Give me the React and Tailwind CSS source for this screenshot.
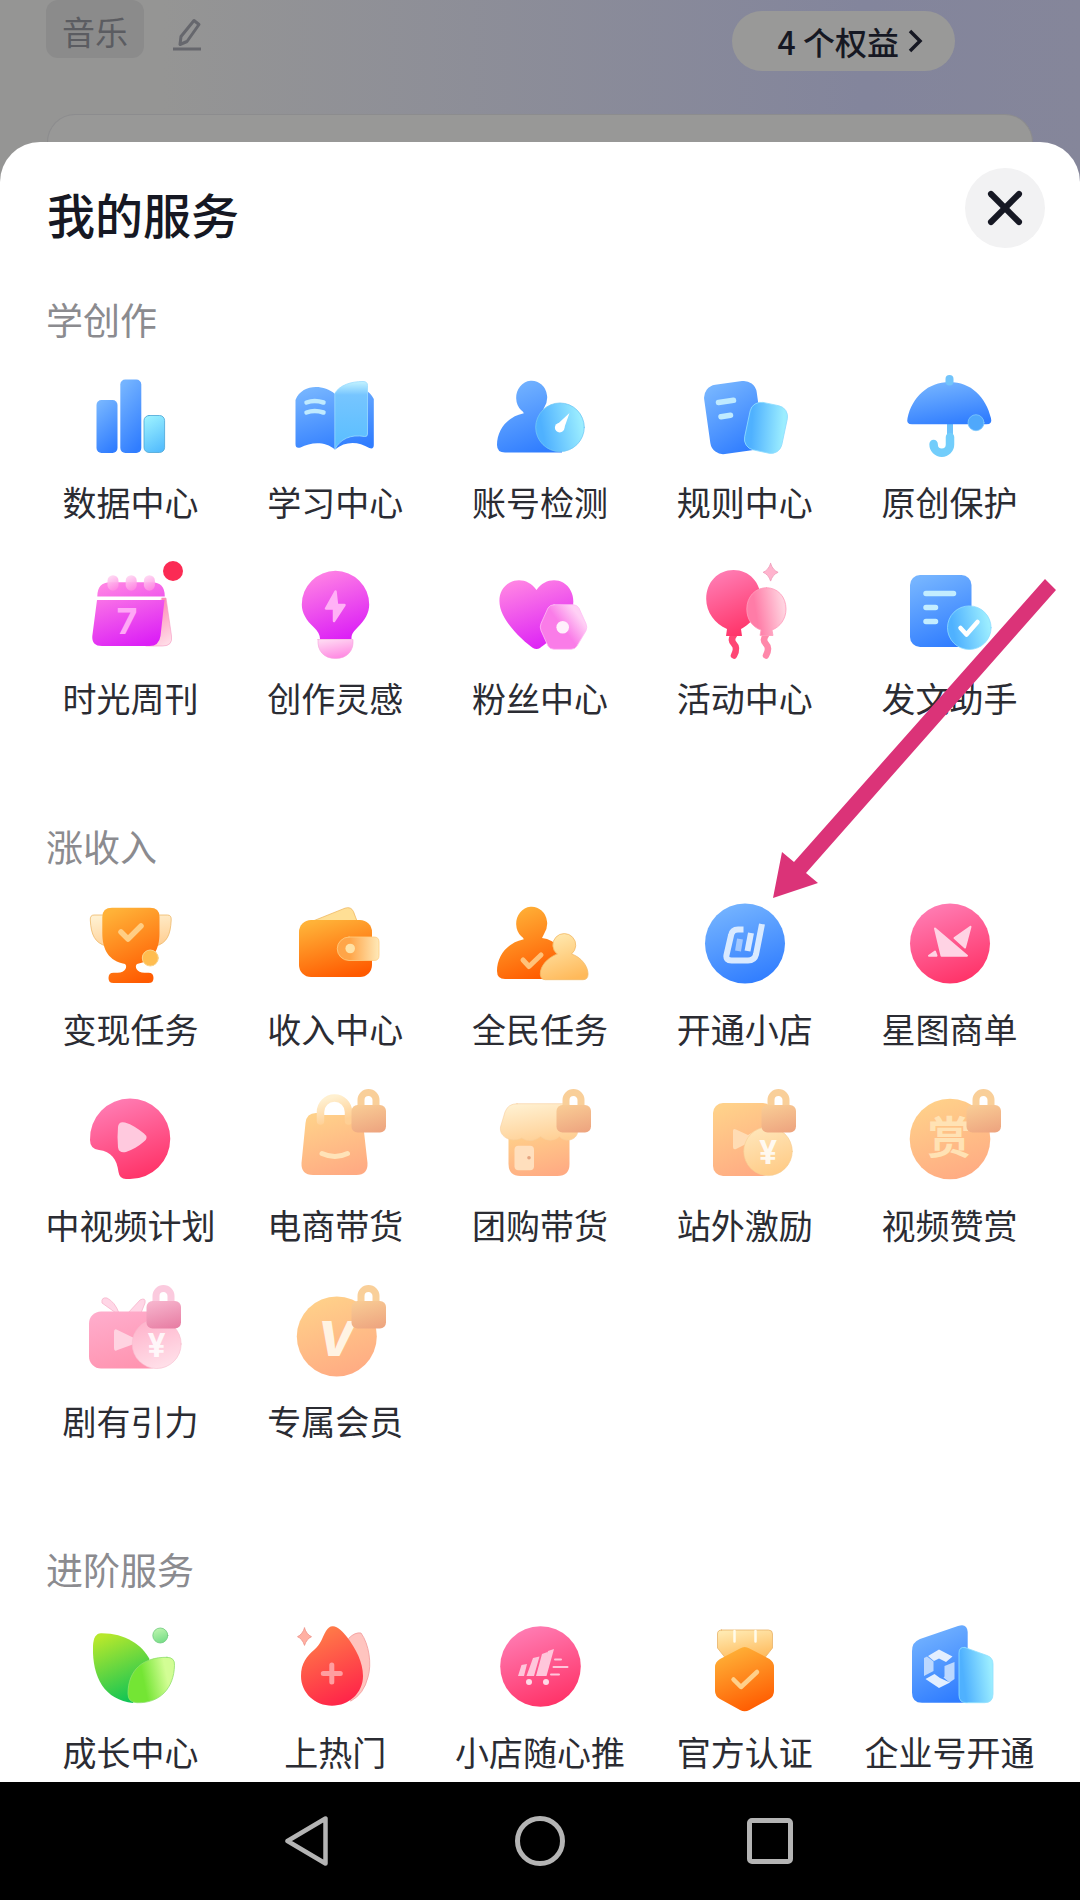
import React from 'react';
import { X } from 'lucide-react';

const GRADIENTS = {
  blue: ['#75b4ff', '#307dff'],
  cyan: ['#9af0ff', '#55bdfd'],
  magenta: ['#ff83e4', '#dc1ff6'],
  blush: ['#ffd7f2', '#ff86e2'],
  rose: ['#ff7db4', '#ff3267'],
  petal: ['#ff7fae', '#ffdbe6'],
  orange: ['#ffb238', '#ff5a00'],
  cream: ['#ffe9b0', '#ffb95a'],
  coinSand: ['#ffe6ba', '#ffcb86'],
  sand: ['#ffd18a', '#ffab83'],
  vanilla: ['#fff0d0', '#ffcf94'],
  lockSand: ['#f8ca94', '#eea680'],
  pink: ['#ffaccb', '#ff94b0'],
  lockPink: ['#f6b3cc', '#e880a5'],
  coinPink: ['#ffb3cb', '#ffe1ea'],
  green: ['#b6e82c', '#0cc356'],
  mint: ['#bdf5ae', '#75dc86'],
  fire: ['#ff8048', '#ff2349'],
};

const Gradients = () => (
  <svg className="absolute h-0 w-0" aria-hidden="true">
    <defs>
      {Object.entries(GRADIENTS).map(([name, [from, to]]) => (
        <linearGradient key={name} id={name} x1="0.3" y1="0" x2="0.65" y2="1">
          <stop offset="0" stopColor={from} />
          <stop offset="1" stopColor={to} />
        </linearGradient>
      ))}
      <linearGradient id="glassX" x1="0" y1="0.4" x2="1" y2="0.2">
        <stop offset="0.1" stopColor="#4fb1ff" />
        <stop offset="0.9" stopColor="#9bedff" />
      </linearGradient>
      <linearGradient id="limeX" x1="0" y1="0.4" x2="1" y2="0.2">
        <stop offset="0.3" stopColor="#74e534" />
        <stop offset="0.8" stopColor="#d2fd94" />
      </linearGradient>
      <linearGradient id="petalX" x1="0" y1="0.4" x2="1" y2="0.2">
        <stop offset="0.2" stopColor="#ff7ca7" />
        <stop offset="0.9" stopColor="#ffd2df" />
      </linearGradient>
      <linearGradient id="hexX" x1="0.3" y1="0.7" x2="1" y2="0.2">
        <stop offset="0.3" stopColor="#fa7ce8" />
        <stop offset="0.8" stopColor="#ffd0f5" />
      </linearGradient>
      <linearGradient id="page" x1="0" y1="0" x2="0" y2="1">
        <stop offset="0" stopColor="#c3f3ff" />
        <stop offset="0.2" stopColor="#76c5ff" />
        <stop offset="1" stopColor="#58beff" />
      </linearGradient>
      <linearGradient id="clasp" x1="0" y1="0" x2="1" y2="0">
        <stop offset="0.3" stopColor="#ffa548" />
        <stop offset="1" stopColor="#ffe9b8" />
      </linearGradient>
    </defs>
  </svg>
);

const Icon = ({ children }) => (
  <svg className="h-[100px] w-[100px] overflow-visible" viewBox="0 0 100 100" fill="none" strokeLinecap="round" strokeLinejoin="round" aria-hidden="true">
    {children}
  </svg>
);

const Lock = ({ fill = 'url(#lockSand)', shackle = '#f9cf99' }) => (
  <g>
    <path d="M76 18V11a7.500 7.500 0 0 1 15 0v7" stroke={shackle} strokeWidth="7" strokeLinecap="butt" />
    <rect x="66.500" y="16" width="34.500" height="27.500" rx="6" fill={fill} />
  </g>
);

const Yen = ({ x, y }) => (
  <text x={x} y={y} textAnchor="middle" fontSize="33" fontWeight="700" fill="#fff" fillOpacity="0.85" fontFamily="Roboto, sans-serif">¥</text>
);

const DataIcon = () => (
  <Icon>
    <rect x="16.500" y="34" width="21" height="53" rx="5" fill="url(#blue)" />
    <rect x="40.300" y="13.500" width="21" height="73.500" rx="5" fill="url(#blue)" />
    <rect x="64" y="49.500" width="20.600" height="37" rx="5" fill="url(#cyan)" stroke="#4aa5d6" strokeWidth="0.800" />
  </Icon>
);

const BookIcon = () => (
  <Icon>
    <path d="M10.500 34C17 18 38 18 50 28C62 18 81 18 88.800 33V79q0 4.500-4.500 3C73 75 60 75 50 83.500C40 75 26 76 15.500 81.500q-5 1.500-5-3.500z" fill="url(#blue)" />
    <path d="M50 27C55 19 66 15.500 78 15.500q4.500 0 4.500 4V68q0 3-3 2.500C66 68 55 73 50 83z" fill="url(#page)" stroke="#9bdcff" strokeWidth="0.800" />
    <path d="M21.500 36.500q8-3 17 0M21.500 46.500q8-3 17 0" stroke="#bfeaff" strokeWidth="4.500" />
  </Icon>
);

const AccountIcon = () => (
  <Icon>
    <path d="M31 44q4 3 2 3.500C17 51 7 64 7 79q0 7.500 8 7.500h57V56Q62 47 52 46l2-4A15.500 17 0 1 0 31 44z" fill="url(#blue)" />
    <circle cx="70" cy="61.300" r="24.300" fill="url(#glassX)" stroke="#72c8f5" strokeWidth="0.800" />
    <path d="M66 59.500L79.500 47L73.500 64z" fill="#fff" />
    <circle cx="69.700" cy="61.700" r="4.800" fill="#fff" />
  </Icon>
);

const RulesIcon = () => (
  <Icon>
    <rect x="12" y="16.500" width="53" height="70" rx="13" transform="rotate(-8 39 51.500)" fill="url(#blue)" />
    <rect x="52" y="37.500" width="38" height="48.500" rx="11" transform="rotate(12 70.700 61.700)" fill="url(#glassX)" stroke="#8fdcff" strokeWidth="0.800" />
    <path d="M23.500 36.500L38.500 34.300M26 50.800L35.500 49.300" stroke="#bfeaff" strokeWidth="5.500" />
  </Icon>
);

const UmbrellaIcon = () => (
  <Icon>
    <path d="M47 56h6v14h-6z" fill="#6dc2fb" />
    <path d="M50 71v7.500a8.200 8.200 0 0 1-16.400 0V78" stroke="#72cdfb" strokeWidth="8.500" />
    <path d="M12 58.300q-6 0-4.500-6C12 31 28 16 49.500 16S86 31 91 52.300q1.500 6-4.500 6z" fill="url(#blue)" />
    <rect x="45.500" y="9" width="8" height="10.500" rx="4" fill="#72c4fb" />
    <circle cx="76" cy="56.700" r="8" fill="#4fa8fb" stroke="#7dc8fb" strokeWidth="0.800" />
  </Icon>
);

const CalendarIcon = () => (
  <Icon>
    <path d="M82 36h4L91.500 74q1.500 10-9 10H66z" fill="url(#petal)" stroke="#f59ac4" strokeWidth="0.600" />
    <path d="M17.300 34.500q0-14.200 13-14.200h41.500q13 0 13 14.200zM17 38h67.500L80.500 74q-1.500 10-11 10H22q-10.500 0-9.700-10z" fill="url(#magenta)" />
    {[33, 51.2, 69.4].map((x) => (
      <rect key={x} x={x - 5.5} y="13.200" width="11" height="15.500" rx="5.500" fill="url(#blush)" fillOpacity="0.900" />
    ))}
    <text x="47" y="72" textAnchor="middle" fontSize="36" fontWeight="700" fill="#ffa8f6" fontFamily="Inter, sans-serif">7</text>
  </Icon>
);

const BulbIcon = () => (
  <Icon>
    <path d="M35 77q0-6-6-11.500C21.500 58.500 16.800 51 16.800 42.500a33.700 33.700 0 0 1 67.400 0C84.200 51 80 58 72.500 65.500 67 71 66.500 73 66.500 77z" fill="url(#magenta)" />
    <path d="M33 77.500h35C69 89 62 96.500 50.500 96.500S32 89 33 77.500z" fill="url(#blush)" stroke="#f7a0dc" strokeWidth="0.600" />
    <path d="M50.500 29.500L41 46.500h8v12.500L59.500 43h-7.500z" fill="#ffb1f6" stroke="#ffb1f6" strokeWidth="2.500" />
  </Icon>
);

const HeartIcon = () => (
  <Icon>
    <path d="M46.500 28C53 18 65 16 73 20.500C84 27 86 41 80 53C73 67 56 82 50 86q-3.500 2-7 0C36 81 20 67 13 53C7 41 8 27 20 20.500C28 16 40 18 46.500 28z" fill="url(#magenta)" />
    <path d="M64 42.700h19q4 0 6 3.500l7 15.500q1.500 3.500 0 7L87 84q-2 3.300-6 3.300H64q-4 0-6-3.300l-7-15.500q-1.500-3.500 0-7L58 46q2-3.300 6-3.300z" fill="url(#hexX)" stroke="#ffbcf4" strokeWidth="0.800" />
    <circle cx="72.700" cy="65.300" r="6.300" fill="#fff0fc" />
  </Icon>
);

const BalloonIcon = () => (
  <Icon>
    <path d="M39 73q-4 5 0 9t0 11.500" stroke="#ff4775" strokeWidth="6.500" />
    <path d="M38.500 8C54 8 65.800 20 65.800 37C65.800 50 56 62 46 67l1 7H31l1-7C20 62 11.200 50 11.200 37C11.200 20 23 8 38.500 8z" fill="url(#rose)" />
    <path d="M71 73q-4 5 0 9t0 11.500" stroke="#ff88aa" strokeWidth="6.500" />
    <path d="M71.400 25.700C83 25.700 91 35 91 47C91 57 85 65 77 68l1 5.500H65l1-5.500C57 65 51.800 57 51.800 47C51.800 35 60 25.700 71.400 25.700z" fill="url(#petalX)" stroke="#ff9cbb" strokeWidth="0.800" />
    <path d="M75.600 1.500q2 6.500 7.500 8.800q-5.500 2.300-7.500 8.800q-2-6.500-7.500-8.800q5.500-2.300 7.500-8.800z" fill="#ffb4ce" stroke="#ef9ab9" strokeWidth="0.800" />
  </Icon>
);

const AssistantIcon = () => (
  <Icon>
    <rect x="10" y="13" width="61.500" height="72" rx="10" fill="url(#blue)" />
    <path d="M26 31.500h27.500M26 45.500h9.500M26 59.500h9.500" stroke="#c3edff" strokeWidth="5.500" />
    <circle cx="69.300" cy="65.700" r="21.800" fill="url(#glassX)" stroke="#8fdcff" strokeWidth="0.800" />
    <path d="M60.500 66l6 6.500L77.500 60" stroke="#fff" strokeWidth="4.500" />
  </Icon>
);

const TrophyIcon = () => (
  <Icon>
    <path d="M24 22H14q-4 0-3.700 5C11 42 15 50 26 53zM77 22h10.500q4 0 3.700 5C90.500 42 87 50 76 53z" fill="url(#vanilla)" stroke="#eeb768" strokeWidth="0.800" />
    <path d="M32 14.700h38q9.500 0 9.500 9V40C79.500 57 73 68 57 71q-2 1.500-.5 5q2 3.700 8 3.700h4q5 0 5 5.200t-5 5.200H33.500q-5 0-5-5.200t5-5.200h4q6 0 8-3.700q1.500-3.500-.5-5C29 68 22.300 57 22.300 40V24q0-9.300 9.700-9.300z" fill="url(#orange)" />
    <path d="M41 39l7 7L61 33" stroke="#ffce84" strokeWidth="5.500" />
    <circle cx="70.300" cy="65" r="8" fill="#ffbd50" stroke="#fbd48a" strokeWidth="1" />
  </Icon>
);

const WalletIcon = () => (
  <Icon>
    <path d="M28 28L60 15.200q6-2 8.500 3.500L72 28z" fill="#ffdf95" stroke="#efb75f" strokeWidth="0.800" />
    <rect x="14" y="27" width="73" height="57" rx="12" fill="url(#orange)" />
    <path d="M64 44h25q5 0 5 5v13.500q0 5-5 5H64A11.700 11.700 0 0 1 64 44z" fill="url(#clasp)" stroke="#ffce82" strokeWidth="0.800" />
    <circle cx="65.200" cy="55.500" r="4.800" fill="#ffe1a5" />
  </Icon>
);

const CrowdIcon = () => (
  <Icon>
    <path d="M31 43q4 3 2 3.500C17 50 7 63 7 78q0 8 8 8h57V56Q62 46 52 45l2-4A15.500 17 0 1 0 31 43z" fill="url(#orange)" />
    <path d="M33 67l6 6.500L51 62" stroke="#ffc27a" strokeWidth="5" />
    <path d="M67 61C57 65 50.300 73 50.300 81q0 5.700 5 5.700H93q5 0 5-5.700C98 73 91 64 81.500 61A11.500 11.500 0 1 0 67 61z" fill="url(#cream)" stroke="#f3b966" strokeWidth="0.800" />
  </Icon>
);

const ShopIcon = () => (
  <Icon>
    <circle cx="50" cy="50.500" r="40" fill="url(#blue)" />
    <g stroke="#d9eaff" strokeLinecap="butt">
      <path d="M48.500 36.500H43q-6 0-7 6L31.500 62q-1 5.500 5 5.500H53q6.500 0 8-6L67 31" strokeWidth="6" />
      <path d="M52.500 58L56 40" strokeWidth="6" />
      <path d="M43 58l2-12" strokeWidth="6" strokeOpacity="0.600" />
    </g>
  </Icon>
);

const StarIcon = () => (
  <Icon>
    <circle cx="50" cy="50.500" r="40" fill="url(#rose)" />
    <path d="M35 35.500L67 62.700H41.500zM70.500 33.700L54.500 45l10.500 9.500zM29 62.700l6-4.200 1.500 4.200z" fill="#ffd3e4" stroke="#ffd3e4" strokeWidth="2" />
  </Icon>
);

const VideoIcon = () => (
  <Icon>
    <path d="M50 9.500a40 40 0 0 1 0 80.500h-4q-6.500 0-7.500-7C37 70 31 62.500 19 61q-9-1-9-10A40 40 0 0 1 50 9.500z" fill="url(#rose)" />
    <path d="M38 38q.5-6 7-4.500c7 2 12 5.500 19 11q5 4 0 8c-6 5-11 8-18 10.500q-7 1.500-8-4.500q-1-10 0-20.500z" fill="#ffc9de" />
  </Icon>
);

const BagIcon = () => (
  <Icon>
    <path d="M31 24h36q10 0 11 10l4.500 40q.5 12-11 12H28Q16 86 16.500 74l4-40q1-10 10.500-10z" fill="url(#sand)" />
    <path d="M36.500 26a13 12 0 0 1 26 0z" fill="#fff" />
    <path d="M35.500 32V23a14 14 0 0 1 28 0v9" stroke="url(#vanilla)" strokeWidth="7.500" />
    <path d="M37 64.500q13 6 25.500 0" stroke="#ffe3b8" strokeWidth="5" />
    <Lock />
  </Icon>
);

const StoreIcon = () => (
  <Icon>
    <path d="M18.500 40h61v35q0 12-12 12h-37q-12 0-12-12z" fill="url(#sand)" />
    <path d="M27 14.700h46q9 0 11.500 8L88 39c1 13-13 15-18.500 8.500q-9 7.500-19 0q-9.500 7.500-19 1.500C23 54 9 49 10.500 38L15 23q3-8.300 12-8.300z" fill="url(#vanilla)" stroke="#f9cf9c" strokeWidth="0.600" />
    <rect x="24.500" y="56.700" width="19.500" height="24.500" rx="4" fill="#ffdfbd" />
    <circle cx="39" cy="68.700" r="1.800" fill="#e5a480" />
    <Lock />
  </Icon>
);

const OffsiteIcon = () => (
  <Icon>
    <rect x="18" y="14" width="60" height="73" rx="10" fill="url(#sand)" />
    <path d="M38 42q0-3 3-1.500L53 46l10-6q8-1 11 6v13L53 54l-12 6q-3 1-3-2z" fill="#ffdcb4" />
    <circle cx="73" cy="62.300" r="24.300" fill="url(#coinSand)" stroke="#f6cd92" strokeWidth="0.600" />
    <Yen x="73" y="75" />
    <Lock />
  </Icon>
);

const RewardIcon = () => (
  <Icon>
    <circle cx="50" cy="50" r="40.300" fill="url(#sand)" />
    <text x="49.500" y="65" textAnchor="middle" fontSize="44" fontWeight="700" fill="#ffe2b4" fontFamily="'Noto Sans CJK SC', sans-serif">赏</text>
    <Lock />
  </Icon>
);

const DramaIcon = () => (
  <Icon>
    <path d="M36 28L22 18q-1-6 5-5q8 4 12 15zM48 28l12-13q6-3 5 3L61 28z" fill="#ffd6e6" stroke="#f6b5cc" strokeWidth="0.800" />
    <rect x="9" y="26.500" width="73" height="57" rx="12" fill="url(#pink)" />
    <path d="M34 47q0-4 3.500-2L54 53v6L37.500 65q-3.500 2-3.500-2z" fill="#ffd3e1" />
    <circle cx="76.700" cy="59" r="24.500" fill="url(#coinPink)" stroke="#f7bdcf" strokeWidth="0.600" />
    <Yen x="76.700" y="72" />
    <Lock fill="url(#lockPink)" shackle="#fbcade" />
  </Icon>
);

const MemberIcon = () => (
  <Icon>
    <circle cx="51.800" cy="51.500" r="40" fill="url(#sand)" />
    <text x="51" y="71" textAnchor="middle" fontSize="48" fontWeight="800" fontStyle="italic" fill="#fff3e3" fontFamily="Inter, sans-serif">V</text>
    <Lock />
  </Icon>
);

const LeafIcon = () => (
  <Icon>
    <path d="M21 17.300C45 17 62 29 69.500 43L53 87C25 84 12 62 13 30Q13.500 17.500 21 17.300z" fill="url(#green)" />
    <path d="M87 41.300q8 0 7.500 8C94 72 80 87.500 57 86.700q-9-.2-9-9C48 54 63 41 87 41.300z" fill="url(#limeX)" stroke="#8ee06a" strokeWidth="0.800" />
    <circle cx="80.300" cy="19.500" r="7.500" fill="url(#mint)" stroke="#6fca7d" strokeWidth="0.800" />
  </Icon>
);

const FireIcon = () => (
  <Icon>
    <path d="M64 22q6-6 12-5C84 28 87 48 83 61Q79 78 66 85z" fill="#ffc4bf" stroke="#f19b9b" strokeWidth="0.800" />
    <path d="M48 10.300C53 10.500 57 15 62 21C71 33 78 46 78 60C78 77 64 89.700 47 89.700S16 77 16 60C16 47 22 40 29 34C36 28 37 22 41 15Q44 10 48 10.300z" fill="url(#fire)" />
    <path d="M46.800 49v17M38.300 57.500h17" stroke="#ff9ea0" strokeWidth="5" />
    <path d="M19.500 12q2 6.500 7 8.700q-5 2.300-7 8.700q-2-6.500-7-8.700q5-2.300 7-8.700z" fill="#ffb0a3" stroke="#ee9086" strokeWidth="0.800" />
  </Icon>
);

const CartIcon = () => (
  <Icon>
    <circle cx="50.500" cy="50.500" r="40.300" fill="url(#rose)" />
    <path d="M31.500 49l5.500-1-3 12h-6zM43 42l6.500-1.500L44 60h-7.500zM52 38l5.500-2L52 60h-6zM58 35l6-2-7.500 27h-6.500z" fill="#ffc6db" />
    <path d="M65 43.500h6M63.500 51H77.500M61 58.500h8" stroke="#ffc6db" strokeWidth="2" />
    <circle cx="39" cy="66" r="3" fill="#ffd9e7" />
    <circle cx="56" cy="66" r="3" fill="#ffd9e7" />
  </Icon>
);

const MedalIcon = () => (
  <Icon>
    <path d="M26.500 14h47q4 0 4 4v14L68 44H32l-9.500-12V18q0-4 4-4z" fill="url(#cream)" stroke="#e8b368" strokeWidth="0.800" />
    <path d="M39.500 15v10.500M60.500 15v10.500" stroke="#fffbea" strokeWidth="2.500" />
    <path d="M45 32.500q4.500-3 9.500 0L74.500 43q4.500 3 4.500 8v24q0 5-4.500 8L54.500 94q-5 2.500-9.500 0L25 83q-5-3-5-8V51q0-5 5-8z" fill="url(#orange)" />
    <path d="M38.500 63.500l7.500 7.500L62 56" stroke="#ffd08a" strokeWidth="4.500" />
  </Icon>
);

const EnterpriseIcon = () => (
  <Icon>
    <path d="M12 35q0-9 8-12L58 10q9-3 9.700 6v70.700H22q-10 0-10-10z" fill="url(#blue)" />
    <path d="M65 31.500l22 8q6 2 6 8.500v30q0 8.700-8.500 8.700H66q-7 0-7-7.700V37q0-6.500 6-5.500z" fill="url(#glassX)" stroke="#8fe0ff" strokeWidth="0.800" />
    <path d="M28 40l11-6.500 13.500 7L46 46l-7-3.500-5 2.500z" fill="#e3efff" />
    <path d="M24 42l3-1.500 6.500 5V55L24 60z" fill="#bcd8ff" />
    <path d="M54.500 46v17l-5 3.500-6-5 1-1V50z" fill="#bcd8ff" />
    <path d="M25.500 63l9-5 5.500 4 10 4.500-11 5.500z" fill="#e3efff" />
  </Icon>
);

// 手绘箭头，指向“开通小店”
const Pointer = () => (
  <svg className="pointer-events-none absolute bottom-[95px] left-[77px] z-10 h-[320px] w-[284px]" viewBox="0 0 284 320" aria-hidden="true">
    <path d="M273 1L284 12L34 295L46 305L1 320L10 274L22 284z" fill="#db3378" />
  </svg>
);

const sections = [
  {
    title: '学创作',
    items: [
      { name: '数据中心', icon: DataIcon },
      { name: '学习中心', icon: BookIcon },
      { name: '账号检测', icon: AccountIcon },
      { name: '规则中心', icon: RulesIcon },
      { name: '原创保护', icon: UmbrellaIcon },
      { name: '时光周刊', icon: CalendarIcon, dot: true },
      { name: '创作灵感', icon: BulbIcon },
      { name: '粉丝中心', icon: HeartIcon },
      { name: '活动中心', icon: BalloonIcon },
      { name: '发文助手', icon: AssistantIcon },
    ],
  },
  {
    title: '涨收入',
    items: [
      { name: '变现任务', icon: TrophyIcon },
      { name: '收入中心', icon: WalletIcon },
      { name: '全民任务', icon: CrowdIcon },
      { name: '开通小店', icon: ShopIcon, pointer: true },
      { name: '星图商单', icon: StarIcon },
      { name: '中视频计划', icon: VideoIcon },
      { name: '电商带货', icon: BagIcon },
      { name: '团购带货', icon: StoreIcon },
      { name: '站外激励', icon: OffsiteIcon },
      { name: '视频赞赏', icon: RewardIcon },
      { name: '剧有引力', icon: DramaIcon },
      { name: '专属会员', icon: MemberIcon },
    ],
  },
  {
    title: '进阶服务',
    items: [
      { name: '成长中心', icon: LeafIcon },
      { name: '上热门', icon: FireIcon },
      { name: '小店随心推', icon: CartIcon },
      { name: '官方认证', icon: MedalIcon },
      { name: '企业号开通', icon: EnterpriseIcon },
    ],
  },
];

const ServiceItem = ({ item }) => {
  const ItemIcon = item.icon;
  return (
    <button type="button" className="flex flex-col items-center gap-4">
      <span className="relative block">
        <ItemIcon />
        {item.dot && <span className="absolute -right-[3px] -top-px size-5 rounded-full bg-[#fb2b54]" />}
        {item.pointer && <Pointer />}
      </span>
      <span className="whitespace-nowrap text-[34px] leading-[40px] text-[#2b2c33]">{item.name}</span>
    </button>
  );
};

const ProfileHeader = () => (
  <header>
    <div className="flex h-[114px] items-start pl-[46px] pr-[125px]">
      <span className="rounded-xl bg-[#8b8b8b] px-4 pt-1 text-[33px] leading-[54px] text-[#5b5c61]">音乐</span>
      <button type="button" aria-label="编辑" className="ml-7 mt-4">
        <svg className="h-9 w-8" viewBox="0 0 32 36" fill="none" stroke="#66676d" strokeWidth="3" strokeLinejoin="round" aria-hidden="true">
          <path d="M22 4.500l5 4-12 17-7 3 1-8zM1 33h28" />
        </svg>
      </button>
      <button type="button" className="ml-auto mt-[11px] flex h-[60px] items-center gap-2 rounded-full bg-[#999998] pl-[46px] pr-8 text-[32px] font-medium leading-[60px] text-[#161823]">
        4 个权益
        <svg className="h-6 w-4" viewBox="0 0 16 24" fill="none" stroke="currentColor" strokeWidth="3.500" aria-hidden="true">
          <path d="M3 2l10 10L3 22" />
        </svg>
      </button>
    </div>
    <div className="mx-[47px] h-7 rounded-t-[36px] border border-b-0 border-[#8c8c8e] bg-[#989897]" />
  </header>
);

const NavBar = () => (
  <nav className="flex h-[118px] items-center justify-center gap-[180px] bg-black">
    <button type="button" aria-label="返回">
      <svg className="h-[50px] w-[50px]" viewBox="0 0 50 50" fill="none" stroke="#b4b4b4" strokeWidth="4.500" strokeLinejoin="round" aria-hidden="true">
        <path d="M40.500 2.500v45L2.500 25z" />
      </svg>
    </button>
    <button type="button" aria-label="主页" className="size-[50px] rounded-full border-[5px] border-[#b4b4b4]" />
    <button type="button" aria-label="最近任务" className="flex size-[50px] items-center justify-center">
      <span className="size-[46px] rounded-[5px] border-[5px] border-[#b4b4b4]" />
    </button>
  </nav>
);

const App = () => (
  <div className="flex min-h-screen flex-col bg-linear-to-r from-[#959594] from-15% via-[#83859c] via-80% to-[#85869a] font-['Noto_Sans_CJK_SC','Noto_Sans_CJK_TC',sans-serif]">
    <Gradients />
    <ProfileHeader />
    <main className="flex-1 rounded-t-[40px] bg-white pb-2">
      <div className="flex items-start justify-between pl-[47px] pr-[35px] pt-[26px]">
        <h1 className="mt-4 text-[48px] font-medium leading-[58px] text-[#161823]">我的服务</h1>
        <button type="button" aria-label="关闭" className="flex size-20 items-center justify-center rounded-full bg-[#f2f2f3] text-[#161823]">
          <X size={56} strokeWidth={2.6} />
        </button>
      </div>
      <div className="mt-12 flex flex-col gap-[105px]">
        {sections.map((section) => (
          <section key={section.title}>
            <h2 className="mb-6 pl-[46px] text-[37px] leading-[46px] text-[#8b8b8f]">{section.title}</h2>
            <div className="grid grid-cols-5 gap-y-10 px-7">
              {section.items.map((item) => (
                <ServiceItem key={item.name} item={item} />
              ))}
            </div>
          </section>
        ))}
      </div>
    </main>
    <NavBar />
  </div>
);

export default App;
